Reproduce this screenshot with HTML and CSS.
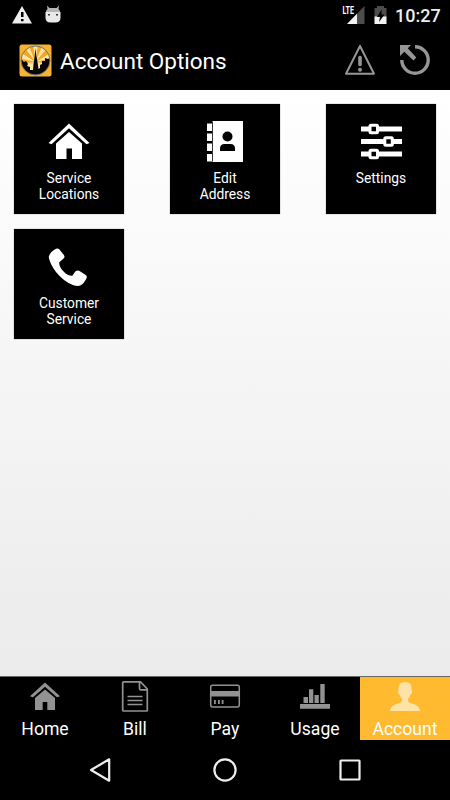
FILE: index.html
```html
<!DOCTYPE html>
<html lang="en">
<head>
<meta charset="utf-8">
<title>Account Options</title>
<link rel="stylesheet" href="styles.css">
</head>
<body>
<div class="screen">
  <div class="status">
    <svg class="status-alert" width="20" height="18" viewBox="0 0 20 18"><path d="M10 0 20 17.500H0Z" fill="#eee"/><path d="M9 6h2.500v5H9zM9 13h2.500v2.300H9z" fill="#000"/></svg>
    <svg class="status-droid" width="16" height="18" viewBox="0 0 16 18"><path d="M1 8V6l1.500-2L2 .5 4.500 3h7L14 .5 13.500 4 15 6v2z" fill="#b5b5b5"/><path d="M.5 7h15v5.500q0 5-5 5h-5q-5 0-5-5z" fill="#e8e8e8"/><path d="M3 9h2v1.500H3zM11 9h2v1.500h-2z" fill="#333"/></svg>
    <span class="grow"></span>
    <svg class="signal" width="23" height="20" viewBox="0 0 23 20"><path d="M22.500 2v18H5z" fill="#4c4c4c"/><path d="M15 9.700V20H5z" fill="#f2f2f2"/><text class="lte" x="0.500" y="9.500" textLength="11.500" lengthAdjust="spacingAndGlyphs">LTE</text></svg>
    <svg class="battery" width="13" height="18" viewBox="0 0 13 18"><path d="M3 0h7v2h2.500v9H.5V2H3z" fill="#4c4c4c"/><path d="M.5 10.500h12V18H.5z" fill="#f2f2f2"/><path d="M7.500 3.500 3 11h3l-1 5 5.500-7.500h-3z" fill="#000"/></svg>
    <span class="clock">10:27</span>
  </div>

  <header class="header">
    <svg class="logo" width="33" height="33" viewBox="0 0 33 33">
      <defs><clipPath id="disc"><circle cx="16.500" cy="16.500" r="14.300"/></clipPath></defs>
      <rect x=".5" y=".5" width="32" height="32" rx="2.500" fill="#f9b233"/>
      <circle cx="16.500" cy="16.500" r="14.500" fill="#fbe6a6"/>
      <g clip-path="url(#disc)">
        <path d="M16.500 18 0 20V14zM16.500 18 1 8l5-4zM16.500 18 9 0h5zM16.500 18 19 0h5zM16.500 18 28 4l4 5zM16.500 18 33 14v6z" fill="#f5a623"/>
        <path d="M0 33V17l3-1 2 2 2-1 2 3-1 2 3 1 0 3 3 0 .5-6 .8-5 .4-3 .8-8 .8 8 .7 3 .8 5 .7 5 1.500-1 0-3 2-1 0-3 3 0 0-3 3 1 2-1 3 1v17z" fill="#080703"/>
      </g>
      <circle cx="16.500" cy="16.500" r="14.500" fill="none" stroke="#6c716e"/>
    </svg>
    <h1 class="title">Account Options</h1>
    <span class="grow"></span>
    <svg class="alert" width="32" height="32" viewBox="0 0 32 32"><path d="M16 2 30 29.700H2Z" fill="none" stroke="#969696" stroke-width="2" stroke-linejoin="round"/><path d="M16 13.500v7" stroke="#969696" stroke-width="3.600" stroke-linecap="round"/><circle cx="16" cy="25.700" r="2" fill="#969696"/></svg>
    <svg class="logout" width="30" height="30" viewBox="0 0 30 30"><path d="M15 1.800A13.200 13.200 0 1 1 1.800 15" fill="none" stroke="#969696" stroke-width="3.400"/><path d="M0 0h11L7.800 3.300l8.500 9.200-2.800 3-9.200-8.700L0 11z" fill="#969696"/></svg>
  </header>

  <main class="content">
    <a class="tile">
      <svg class="tile-icon" viewBox="31 14 48 48" fill="#fff"><path d="M55 19.500 75.500 39l-3 1.300L55 24.300 37.500 40.300l-3-1.300z"/><path d="M55 28 68 39.500V55H58V44.500H52.500V55H42V39.500z"/></svg>
      <span>Service<br>Locations</span>
    </a>
    <a class="tile">
      <svg class="tile-icon" viewBox="31 14 48 48"><path d="M37 19.500h5V27h-5zM37 29.500h5V37h-5zM37 39.500h5V47h-5zM37 50h5v7.500h-5zM42.500 17h30.500v41H42.500z" fill="#fff"/><path d="M42.500 18v39" stroke="#000" stroke-width=".6"/><circle cx="57.500" cy="32.500" r="5" fill="#000"/><path d="M50 47v-2.500q0-4.500 4.500-4.500h6q4.500 0 4.500 4.500V47z" fill="#000"/></svg>
      <span>Edit<br>Address</span>
    </a>
    <a class="tile">
      <svg class="tile-icon" viewBox="31 14 48 48"><path d="M35 25h41M35 37.500h41M35 50h41" stroke="#fff" stroke-width="5"/><g fill="#000" stroke="#fff" stroke-width="3"><rect x="44" y="21.300" width="7.500" height="7.500" rx="1"/><rect x="58.800" y="33.800" width="7.500" height="7.500" rx="1"/><rect x="44" y="46.300" width="7.500" height="7.500" rx="1"/></g></svg>
      <span>Settings</span>
    </a>
    <a class="tile">
      <svg class="tile-icon" viewBox="31 14 48 48"><path d="M42 19.700q1.800-.8 3.200.5l4.700 5.800q1.300 2-.3 3.600l-4.300 3.700q-.5 4.500 4.300 9.200 4.300 4.500 8.700 4.300l3-4.200q1.600-1.700 3.800-.9l6.300 4q2 1.300 1.200 3.300-2.300 5.300-6.300 7.500-2.300.9-7-.3Q49.500 52.500 42 43q-6.300-8.500-7.300-15 1.500-5.500 7.300-8.300z" fill="#fff"/></svg>
      <span>Customer<br>Service</span>
    </a>
  </main>

  <nav class="tabs">
    <a class="tab"><svg class="tab-icon" viewBox="0 0 32 32" fill="#929292"><path d="M16 2.500 31 16.200l-3 1L16 6.800 4 17.200l-3-1z"/><path d="M16 9.500 26 18v12h-7.700v-8h-4.600v8H6V18z"/></svg><span>Home</span></a>
    <a class="tab"><svg class="tab-icon" viewBox="0 0 32 32" fill="none" stroke="#929292" stroke-width="1.700"><path d="M4.700 1.800H21.500L28.300 9v21.200q0 .8-1 .8H4.700q-1 0-1-.8V2.600q0-.8 1-.8zM20.500 2v6.500q0 1.300 1.300 1.300h6.500"/><path d="M8.500 16.500h15M8.500 20.500h15M8.500 24.500h15"/></svg><span>Bill</span></a>
    <a class="tab"><svg class="tab-icon" viewBox="0 0 32 32"><rect x="1.700" y="5.300" width="28.600" height="21.600" rx="1.800" fill="none" stroke="#929292" stroke-width="1.500"/><path d="M2 11h28v5.500H2zM5 20h1.800v4H5zM9 20h1.800v4H9zM12.700 20h1.800v4h-1.800z" fill="#929292"/></svg><span>Pay</span></a>
    <a class="tab"><svg class="tab-icon" viewBox="0 0 32 32" fill="#929292"><path d="M1 24h30v4.700H1zM4.500 17H9v6H4.500zM10 9.300h4.300V23H10zM15.500 15h4.300v8h-4.300zM21.300 4h4.400v19h-4.400z"/></svg><span>Usage</span></a>
    <a class="tab tab-active"><svg class="tab-icon" viewBox="0 0 32 32" fill="#ffe2a5"><path d="M16 2q6.500 0 6.500 6v2q1 .5.500 2.500t-1.500 2.200q-.7 2.500-2.500 4.300v2.300q1 1.500 4.500 2.500 6.500 1.800 7.500 6.500v.7H1v-.7q1-4.700 7.500-6.500 3.500-1 4.500-2.500V19q-1.800-1.800-2.500-4.300-1-.2-1.500-2.200T9.500 10V8q0-6 6.500-6z"/></svg><span>Account</span></a>
  </nav>

  <div class="system">
    <svg class="sys-icon" viewBox="0 0 26 26"><path d="M22.200 2.300v21.400L4 13z"/></svg>
    <svg class="sys-icon" viewBox="0 0 26 26"><circle cx="13" cy="13" r="10.600"/></svg>
    <svg class="sys-icon" viewBox="0 0 26 26"><rect x="3.500" y="3.500" width="19" height="19" rx=".5"/></svg>
  </div>
</div>
</body>
</html>
```
FILE: styles.css
```css
* { box-sizing: border-box; }

body {
  margin: 0;
  background: #000;
  color: #fff;
  font-family: Roboto, sans-serif;
}

.screen {
  display: flex;
  flex-direction: column;
  width: 450px;
  height: 800px;
  overflow: hidden;
}

svg { display: block; flex: none; }
.grow { flex: 1; }

.status {
  display: flex;
  height: 30px;
  padding: 0 10px 0 12px;
}
.status-alert { margin-top: 6px; }
.status-droid { margin: 5px 0 0 13px; }
.signal { margin: 4px 9px 0 0; }
.lte { font: bold 10px Roboto, sans-serif; fill: #fff; }
.battery { margin: 6px 8px 0 0; }
.clock {
  font-size: 18px;
  font-weight: 500;
  line-height: 31px;
  color: #eee;
  width: 45px;
  white-space: nowrap;
}

.header {
  display: flex;
  align-items: center;
  height: 60px;
  padding: 0 20px 0 19px;
}
.title {
  margin: 1px 0 0 8px;
  font-size: 22.500px;
  font-weight: 400;
  line-height: 30px;
}
.alert { margin-right: 24px; }

.content {
  display: grid;
  grid-template-columns: repeat(3, 110px);
  grid-auto-rows: 110px;
  justify-content: space-between;
  align-content: start;
  row-gap: 15px;
  height: 586px;
  padding: 14px;
  background: linear-gradient(#fff, #ebebeb);
}
.tile {
  display: flex;
  flex-direction: column;
  align-items: center;
  padding-top: 14px;
  background: #000;
  box-shadow: 0 0 1px #777;
  font-size: 13.800px;
  line-height: 16px;
  text-align: center;
}
.tile-icon { width: 48px; height: 48px; margin-bottom: 4px; }

.tabs {
  display: grid;
  grid-template-columns: repeat(5, 90px);
  height: 64px;
  border-top: 1px solid #666;
}
.tab {
  display: flex;
  flex-direction: column;
  align-items: center;
  padding-top: 3px;
  font-size: 17.600px;
  line-height: 22px;
}
.tab-icon { width: 32px; height: 32px; margin-bottom: 6px; }
.tab-active { background: #ffba30; }

.system {
  display: flex;
  justify-content: space-between;
  align-items: center;
  height: 60px;
  padding: 0 87px;
}
.sys-icon {
  width: 26px;
  height: 26px;
  fill: none;
  stroke: #eee;
  stroke-width: 2.200;
  stroke-linejoin: round;
}
```
